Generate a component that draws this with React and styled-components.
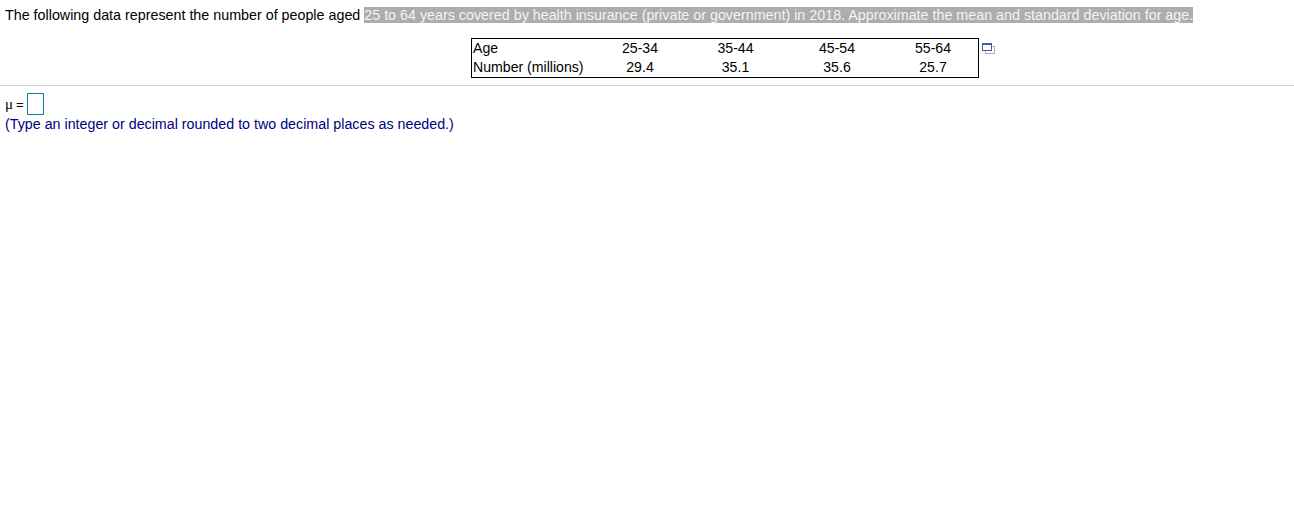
import React from 'react';
import styled, { createGlobalStyle } from 'styled-components';

const GlobalStyle = createGlobalStyle`
  html, body {
    margin: 0;
    padding: 0;
    background: #fff;
  }
  body {
    font-family: "Liberation Sans", Arial, sans-serif;
    font-size: 14.3px;
    color: #000;
  }
`;

const Page = styled.div`
  width: 1294px;
  height: 514px;
  overflow: hidden;
`;

const Question = styled.div`
  height: 86px;
  box-sizing: border-box;
  padding: 8px 0 0 5px;
  border-bottom: 1px solid #d3d3dd;
`;

const Prompt = styled.p`
  margin: 0;
  line-height: 15px;
  white-space: nowrap;
`;

const Highlight = styled.span`
  background: #adadad;
  color: #f4f4f4;
`;

const TableRow = styled.div`
  display: flex;
  align-items: flex-start;
  margin: 15px 0 0 466px;
`;

const DataTable = styled.div`
  width: 506px;
  height: 38px;
  border: 1px solid #000;
  font-size: 14.12px;
  display: grid;
  grid-template-columns: 120px 96px 95px 108px 84px 3px;
  grid-template-rows: 19px 19px;
`;

const LabelCell = styled.div`
  padding-left: 1px;
  line-height: 19px;
  white-space: nowrap;
`;

const ValueCell = styled.div`
  text-align: center;
  line-height: 19px;
`;

const Spacer = styled.div``;

const CopyIcon = styled.svg`
  display: block;
  margin: 5px 0 0 3px;
`;

const Answer = styled.div`
  padding: 7px 0 0 5px;
`;

const AnswerLine = styled.div`
  display: flex;
  align-items: center;
  height: 22px;
`;

const Mu = styled.span`
  font-family: "Liberation Serif", "Times New Roman", serif;
  font-size: 15px;
  width: 10px;
`;

const Equals = styled.span`
  font-size: 13px;
  width: 9px;
  margin-left: 1px;
`;

const InputBox = styled.div`
  width: 15px;
  height: 20px;
  margin-left: 2px;
  border: 1px solid #10809a;
  background: #fff;
`;

const Hint = styled.p`
  margin: 0;
  line-height: 15px;
  padding-top: 2px;
  font-size: 14.27px;
  color: #000080;
  white-space: nowrap;
`;

const columns = [
  ['Age', 'Number (millions)'],
  ['25-34', '29.4'],
  ['35-44', '35.1'],
  ['45-54', '35.6'],
  ['55-64', '25.7'],
];

const App = () => (
  <Page>
    <GlobalStyle />
    <Question>
      <Prompt>
        The following data represent the number of people aged{' '}
        <Highlight>
          25 to 64 years covered by health insurance (private or government) in 2018. Approximate the mean and standard deviation for age.
        </Highlight>
      </Prompt>
      <TableRow>
        <DataTable>
          {[0, 1].map((row) =>
            columns.map((col, i) =>
              i === 0 ? (
                <LabelCell key={`${row}-${i}`}>{col[row]}</LabelCell>
              ) : (
                <ValueCell key={`${row}-${i}`}>{col[row]}</ValueCell>
              )
            ).concat(<Spacer key={`${row}-s`} />)
          )}
        </DataTable>
        <CopyIcon width="13" height="11" viewBox="0 0 13 11">
          <rect x="3.5" y="3.5" width="9" height="7" fill="#fff" stroke="#a9aed6" />
          <rect x="0.5" y="0.5" width="9" height="7" fill="#fff" stroke="#4a57a8" />
          <rect x="0" y="0" width="10" height="2" fill="#4a57a8" />
        </CopyIcon>
      </TableRow>
    </Question>
    <Answer>
      <AnswerLine>
        <Mu>μ</Mu>
        <Equals>=</Equals>
        <InputBox />
      </AnswerLine>
      <Hint>(Type an integer or decimal rounded to two decimal places as needed.)</Hint>
    </Answer>
  </Page>
);

export default App;
